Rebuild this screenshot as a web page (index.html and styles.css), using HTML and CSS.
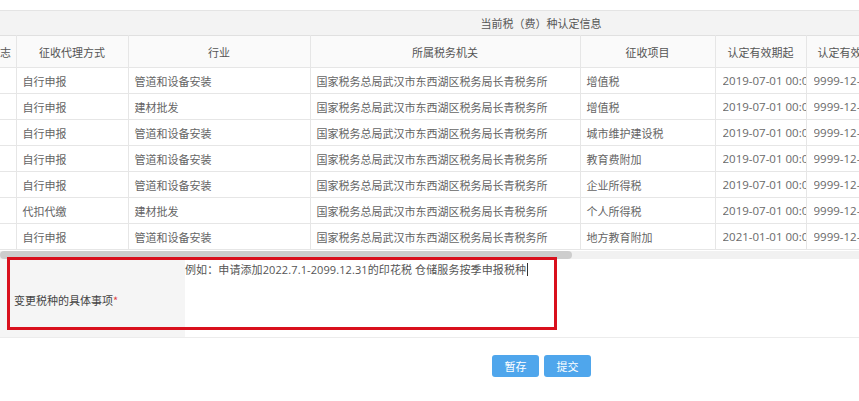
FILE: index.html
```html
<!DOCTYPE html>
<html lang="zh-CN">
<head>
<meta charset="utf-8">
<title>税种认定</title>
<link rel="stylesheet" href="styles.css">
</head>
<body>
<div class="page">
  <div class="scroll">
    <div class="scroll-inner">
      <div class="title">当前税（费）种认定信息</div>
      <table class="grid">
        <colgroup>
          <col class="c1"><col class="c2"><col class="c3"><col class="c4"><col class="c5"><col class="c6"><col class="c7">
        </colgroup>
        <thead>
          <tr><th class="cut">志</th><th>征收代理方式</th><th>行业</th><th>所属税务机关</th><th>征收项目</th><th>认定有效期起</th><th class="left">认定有效期止</th></tr>
        </thead>
        <tbody>
          <tr><td></td><td>自行申报</td><td>管道和设备安装</td><td>国家税务总局武汉市东西湖区税务局长青税务所</td><td>增值税</td><td class="num"><div class="clip">2019-07-01 00:00:00</div></td><td class="num"><div class="clip">9999-12-31 00:00:00</div></td></tr>
          <tr><td></td><td>自行申报</td><td>建材批发</td><td>国家税务总局武汉市东西湖区税务局长青税务所</td><td>增值税</td><td class="num"><div class="clip">2019-07-01 00:00:00</div></td><td class="num"><div class="clip">9999-12-31 00:00:00</div></td></tr>
          <tr><td></td><td>自行申报</td><td>管道和设备安装</td><td>国家税务总局武汉市东西湖区税务局长青税务所</td><td>城市维护建设税</td><td class="num"><div class="clip">2019-07-01 00:00:00</div></td><td class="num"><div class="clip">9999-12-31 00:00:00</div></td></tr>
          <tr><td></td><td>自行申报</td><td>管道和设备安装</td><td>国家税务总局武汉市东西湖区税务局长青税务所</td><td>教育费附加</td><td class="num"><div class="clip">2019-07-01 00:00:00</div></td><td class="num"><div class="clip">9999-12-31 00:00:00</div></td></tr>
          <tr><td></td><td>自行申报</td><td>管道和设备安装</td><td>国家税务总局武汉市东西湖区税务局长青税务所</td><td>企业所得税</td><td class="num"><div class="clip">2019-07-01 00:00:00</div></td><td class="num"><div class="clip">9999-12-31 00:00:00</div></td></tr>
          <tr><td></td><td>代扣代缴</td><td>建材批发</td><td>国家税务总局武汉市东西湖区税务局长青税务所</td><td>个人所得税</td><td class="num"><div class="clip">2019-07-01 00:00:00</div></td><td class="num"><div class="clip">9999-12-31 00:00:00</div></td></tr>
          <tr><td></td><td>自行申报</td><td>管道和设备安装</td><td>国家税务总局武汉市东西湖区税务局长青税务所</td><td>地方教育附加</td><td class="num"><div class="clip">2021-01-01 00:00:00</div></td><td class="num"><div class="clip">9999-12-31 00:00:00</div></td></tr>
        </tbody>
      </table>
    </div>
  </div>
  <div class="scrollbar"><div class="thumb"></div></div>

  <div class="form-row">
    <div class="label">变更税种的具体事项<span class="req">*</span></div>
    <div class="field"><span class="value">例如：申请添加2022.7.1-2099.12.31的印花税 仓储服务按季申报税种</span><span class="caret"></span></div>
    <div class="mark"></div>
  </div>

  <div class="actions">
    <button class="btn">暂存</button>
    <button class="btn">提交</button>
  </div>
</div>
</body>
</html>
```
FILE: styles.css
```css
html, body {
  margin: 0;
  padding: 0;
  background: #fff;
}
body {
  font-family: "Open Sans", "Noto Sans CJK SC", sans-serif;
  font-size: 11px;
  color: #5a5a5a;
  width: 859px;
  height: 401px;
  overflow: hidden;
}
.page {
  padding-top: 10px;
}
.scroll {
  width: 859px;
  overflow: hidden;
}
.scroll-inner {
  width: 1082px;
}
.title {
  height: 24px;
  line-height: 24px;
  border-top: 1px solid #e4e4e4;
  background: #f3f3f3;
  text-align: center;
  color: #555;
  font-family: "Noto Sans CJK SC", sans-serif;
}
.grid {
  border-collapse: collapse;
  table-layout: fixed;
  width: 1082px;
}
.c1 { width: 16px; }
.c2 { width: 112px; }
.c3 { width: 182px; }
.c4 { width: 270px; }
.c5 { width: 135px; }
.c6 { width: 91px; }
.c7 { width: 276px; }
.grid th {
  height: 31px;
  font-weight: normal;
  color: #555;
  background: #fafafa;
  border: 1px solid #e6e6e6;
  border-top-color: #e0e0e0;
  text-align: center;
  font-family: "Noto Sans CJK SC", sans-serif;
  white-space: nowrap;
  overflow: hidden;
  padding: 0;
}
.grid th.cut {
  text-align: left;
  border-left: none;
}
.grid th.left {
  text-align: left;
  padding-left: 11px;
}
.grid td {
  height: 25px;
  border: 1px solid #e6e6e6;
  padding: 0 0 0 6px;
  white-space: nowrap;
  overflow: hidden;
  font-family: "Noto Sans CJK SC", sans-serif;
  color: #646464;
}
.grid td:first-child {
  border-left: none;
}
.grid td.num {
  font-family: "Open Sans", sans-serif;
  font-size: 11.5px;
  color: #6a6a6a;
  padding: 0 0 0 7px;
}
.clip {
  overflow: hidden;
  white-space: nowrap;
  text-overflow: clip;
}
.scrollbar {
  height: 8px;
  margin-top: 1px;
  background: #f1f1f1;
}
.thumb {
  width: 572px;
  height: 8px;
  border-radius: 4px;
  background: #cdcdcd;
}
.form-row {
  position: relative;
  display: flex;
  height: 78px;
  border-bottom: 1px solid #ececec;
}
.label {
  width: 185px;
  background: #f5f5f5;
  display: flex;
  align-items: center;
  padding-left: 14px;
  box-sizing: border-box;
  font-family: "Noto Sans CJK SC", sans-serif;
  color: #444;
  padding-top: 4px;
}
.req {
  color: #e04545;
}
.field {
  flex: 1;
  background: #fff;
  padding-top: 2px;
  font-family: "Noto Sans CJK SC", sans-serif;
  color: #555;
  font-size: 11px;
  line-height: 16px;
}
.value {
  font-family: "Open Sans", "Noto Sans CJK SC", sans-serif;
  letter-spacing: 0.1px;
}
.caret {
  display: inline-block;
  width: 1px;
  height: 13px;
  background: #333;
  vertical-align: -2px;
  margin-left: 1px;
}
.mark {
  position: absolute;
  left: 7px;
  top: -2px;
  width: 544px;
  height: 67px;
  border: 3px solid #d9101d;
}
.actions {
  display: flex;
  gap: 5px;
  padding-top: 17px;
  padding-left: 492px;
  width: 859px;
  box-sizing: border-box;
}
.btn {
  width: 47px;
  height: 22px;
  border: none;
  border-radius: 3px;
  background: #4fa6ec;
  color: #fff;
  font-family: "Noto Sans CJK SC", sans-serif;
  font-size: 11px;
  padding: 0;
}
```
